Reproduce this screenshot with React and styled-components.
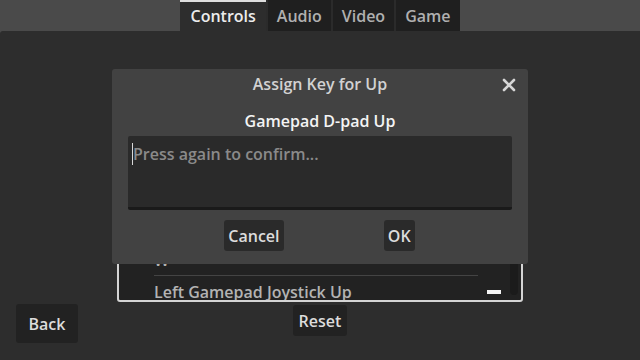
import React from 'react';
import styled, { createGlobalStyle } from 'styled-components';

const GlobalStyle = createGlobalStyle`
  html, body {
    margin: 0;
    padding: 0;
    background: #4a4a4a;
  }
  body {
    font-family: "Open Sans", "Noto Sans", sans-serif;
    font-weight: 600;
    font-size: 16px;
    line-height: 22px;
  }
  #root {
    height: 360px;
  }
`;

const Screen = styled.div`
  position: relative;
  width: 640px;
  height: 360px;
  display: flex;
  flex-direction: column;
  overflow: hidden;
`;

const TopBar = styled.div`
  height: 31px;
  display: flex;
  justify-content: center;
  flex-shrink: 0;
`;

const Tabs = styled.div`
  display: flex;
  gap: 2px;
  background: #2b2b2b;
`;

const Tab = styled.div`
  box-sizing: border-box;
  height: 31px;
  padding: ${p => (p.$active ? '3px 10px 0' : '5px 9px 0')};
  background: ${p => (p.$active ? '#2d2d2d' : '#1f1f1f')};
  border-top: ${p => (p.$active ? '2px solid #dedede' : 'none')};
  color: ${p => (p.$active ? '#ececec' : '#b0b0b0')};
`;

const Body = styled.div`
  flex: 1;
  background: #2d2d2d;
  border-top-left-radius: 3px;
  padding-top: 40px;
  display: flex;
  flex-direction: column;
  align-items: center;
`;

const List = styled.div`
  box-sizing: border-box;
  width: 406px;
  height: 231px;
  border: 2px solid #d4d4d4;
  border-radius: 3px;
  background: #222222;
  display: flex;
  overflow: hidden;
`;

const ListContent = styled.div`
  flex: 1;
  padding: 11px 0 0 35px;
`;

const Row = styled.div`
  display: flex;
  align-items: center;
  gap: 9px;
`;

const RowLabel = styled.div`
  box-sizing: border-box;
  width: 324px;
  padding: 5px 0 4px;
  border-bottom: 1px solid #444444;
  color: #b3b3b3;
`;

const RemoveMark = styled.span`
  width: 14px;
  height: 4px;
  background: #f4f4f4;
  margin-top: -1px;
`;

const ScrollTrack = styled.div`
  width: 8px;
  margin: 5px 3px 5px 0;
  border-radius: 4px;
  background: #1b1b1b;
`;

const Footer = styled.div`
  align-self: stretch;
  margin-top: 2px;
  display: grid;
  grid-template-columns: 1fr auto 1fr;
  align-items: start;
`;

const Button = styled.button`
  box-sizing: border-box;
  height: ${p => p.$tall ? '39px' : '31px'};
  padding: 0 ${p => p.$pad || 4}px;
  border: none;
  border-radius: 3px;
  background: rgba(26, 26, 26, 0.6);
  color: #dcdcdc;
  font: inherit;
  line-height: 22px;
`;

const BackButton = styled(Button)`
  justify-self: start;
  margin-left: 16px;
  width: 62px;
`;

const ResetButton = styled(Button)`
  margin-top: 1px;
`;

const Overlay = styled.div`
  position: absolute;
  top: 69px;
  left: 112px;
`;

const Dialog = styled.div`
  box-sizing: border-box;
  width: 416px;
  height: 195px;
  background: #424242;
  border-radius: 3px;
  display: flex;
  flex-direction: column;
`;

const TitleBar = styled.div`
  position: relative;
  height: 32px;
  padding-top: 4px;
  box-sizing: border-box;
  text-align: center;
  color: #d2d2d2;
`;

const CloseIcon = styled.svg`
  position: absolute;
  right: 12px;
  top: 9px;
`;

const DialogBody = styled.div`
  padding: 9px 16px 13px;
  display: flex;
  flex-direction: column;
`;

const KeyLabel = styled.div`
  text-align: center;
  color: #f4f4f4;
`;

const KeyInput = styled.div`
  box-sizing: border-box;
  margin-top: 4px;
  height: 74px;
  padding: 7px 4px 0;
  background: rgba(26, 26, 26, 0.6);
  border-bottom: 3px solid #1a1a1a;
  border-radius: 2px;
  display: flex;
  align-items: flex-start;
`;

const Caret = styled.span`
  width: 1px;
  height: 22px;
  background: #d8d8d8;
`;

const Placeholder = styled.span`
  color: #8a8a8a;
`;

const ButtonRow = styled.div`
  margin: 10px -16px 0;
  padding: 0 13px 0 12px;
  display: flex;
  justify-content: space-evenly;
`;

const rows = ['Up', 'Up Arrow', 'Keypad 8', 'Gamepad D-pad Up', 'Mouse Wheel Up', 'W', 'Left Gamepad Joystick Up'];

export default function App() {
  return (
    <>
      <GlobalStyle />
      <Screen>
        <TopBar>
          <Tabs>
            <Tab $active>Controls</Tab>
            <Tab>Audio</Tab>
            <Tab>Video</Tab>
            <Tab>Game</Tab>
          </Tabs>
        </TopBar>
        <Body>
          <List>
            <ListContent>
              {rows.map(r => (
                <Row key={r}>
                  <RowLabel>{r}</RowLabel>
                  <RemoveMark />
                </Row>
              ))}
            </ListContent>
            <ScrollTrack />
          </List>
          <Footer>
            <BackButton $tall>Back</BackButton>
            <ResetButton $pad={6}>Reset</ResetButton>
          </Footer>
        </Body>
        <Overlay>
          <Dialog>
            <TitleBar>
              Assign Key for Up
              <CloseIcon width="14" height="14" viewBox="0 0 14 14">
                <path d="M2 2 L12 12 M12 2 L2 12" stroke="#d6d6d6" strokeWidth="2.6" strokeLinecap="round" />
              </CloseIcon>
            </TitleBar>
            <DialogBody>
              <KeyLabel>Gamepad D-pad Up</KeyLabel>
              <KeyInput>
                <Caret />
                <Placeholder>Press again to confirm...</Placeholder>
              </KeyInput>
              <ButtonRow>
                <Button>Cancel</Button>
                <Button>OK</Button>
              </ButtonRow>
            </DialogBody>
          </Dialog>
        </Overlay>
      </Screen>
    </>
  );
}
